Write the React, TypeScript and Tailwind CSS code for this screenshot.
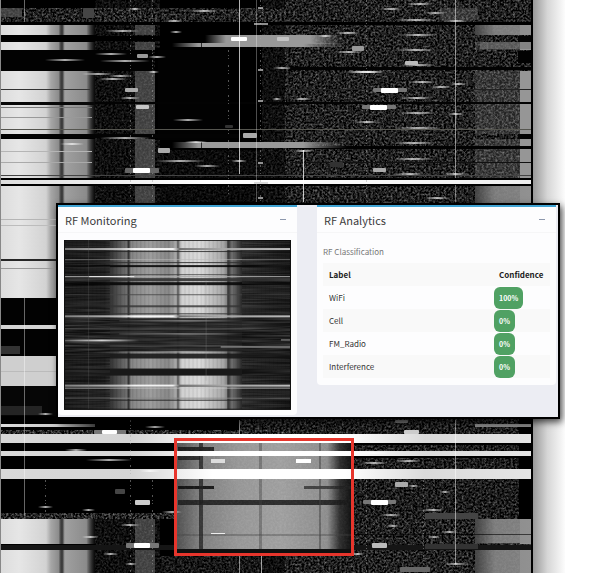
import React from "react";

type Rect = [x: number, y: number, w: number, h: number, fill: string];

// Time slots in which the wide burst on both band edges is active: [y, height]
const edgeBursts: [number, number][] = [
  [25, 10], [42, 8], [71, 31], [104, 30], [139, 159], [519, 25], [550, 23],
];

const quietBands: Rect[] = [
  [0, 22, 531, 3, "#000"], [0, 36, 205, 5, "#000"], [0, 50, 152, 21, "#020202"],
  [155, 48, 60, 92, "#000"], [158, 50, 72, 90, "#020202"], [290, 67, 241, 3, "#030303"],
  [95, 102, 436, 2, "#030303"], [0, 89, 90, 1, "#333"], [0, 102, 95, 3, "#080808"], [0, 134, 250, 4, "#030303"],
  [290, 146, 241, 3, "#020202"], [0, 178, 531, 2, "#000"], [0, 184, 531, 2, "#000"],
  [518, 36, 13, 6, "#050505"], [518, 51, 13, 12, "#020202"], [518, 134, 13, 5, "#050505"],
  [0, 117, 92, 1, "#999"], [0, 107, 92, 1, "#777"], [0, 129, 531, 1, "#55554f"],
  [0, 175, 531, 1, "#444"], [0, 162, 92, 1, "#aaa"], [0, 151, 92, 1, "#b5b5b5"],
  [290, 89, 241, 1, "#222"], [290, 162, 241, 1, "#111"],
  [0, 219, 56, 1, "#b5b5b5"], [0, 225, 56, 1, "#bcbcbc"], [0, 259, 56, 2, "#262626"],
  [0, 268, 56, 1, "#9a9a9a"], [0, 298, 56, 27, "#020202"], [0, 325, 56, 4, "#d4d4d4"],
  [0, 329, 56, 27, "#020202"], [0, 356, 56, 30, "#cfcfcf"], [0, 386, 56, 30, "#060606"],
  [0, 346, 20, 8, "#333"], [0, 406, 42, 9, "#242424"], [0, 371, 56, 1, "#bbb"],
];

const fullBursts: Rect[] = [
  [0, 180, 531, 4, "url(#beam)"], [0, 424, 95, 3, "url(#fadeOut)"], [475, 424, 56, 3, "#888"],
  [0, 434, 531, 9, "url(#band)"], [0, 451, 531, 5, "url(#band)"], [0, 469, 531, 10, "url(#band)"],
];

const blobs: Rect[] = [
  [231, 37, 16, 4, "#fff"], [277, 37, 12, 4, "#c4c4c4"], [137, 54, 11, 4, "#999"], [125, 88, 13, 4, "#aaa"],
  [136, 105, 13, 4, "#c5c5c5"], [158, 148, 12, 5, "#aaa"], [243, 133, 14, 5, "#aaa"],
  [125, 168, 34, 5, "#666"], [133, 168, 17, 5, "#fff"], [352, 46, 12, 5, "#999"],
  [405, 61, 13, 4, "#bbb"], [373, 88, 34, 4, "#777"], [381, 88, 17, 5, "#fff"],
  [362, 105, 34, 4, "#777"], [370, 105, 17, 5, "#fff"], [373, 168, 13, 4, "#aaa"],
  [395, 420, 13, 3, "#777"], [404, 430, 15, 4, "#ccc"], [94, 430, 32, 4, "#777"], [102, 430, 15, 4, "#fff"],
  [115, 489, 10, 5, "#444"], [135, 500, 15, 5, "#ccc"], [395, 482, 13, 5, "#aaa"],
  [363, 500, 33, 4, "#777"], [371, 500, 17, 5, "#fff"], [126, 543, 33, 5, "#777"],
  [134, 543, 16, 5, "#fff"], [372, 543, 15, 5, "#bbb"], [83, 8, 11, 10, "#444"],
  [225, 125, 8, 3, "#333"], [330, 162, 13, 5, "#333"], [400, 567, 30, 5, "#666"],
];

// Short narrowband transmissions: [x, y, width]
const ticks: [number, number, number][] = [
  [45, 59, 40], [100, 60, 50], [95, 53, 32], [148, 56, 18], [98, 78, 30], [108, 75, 25], [105, 30, 35],
  [170, 31, 12], [190, 10, 28], [165, 20, 18], [129, 8, 12], [82, 73, 32], [148, 71, 11], [120, 97, 20],
  [173, 119, 30], [100, 137, 50], [185, 141, 22], [194, 165, 26], [155, 160, 50], [231, 160, 16], [60, 143, 24],
  [273, 67, 18], [272, 98, 10], [335, 32, 25], [380, 8, 22], [406, 3, 28], [425, 12, 20], [395, 19, 42],
  [443, 20, 26], [345, 71, 36], [399, 34, 38], [396, 49, 40], [400, 64, 36], [408, 81, 28], [430, 86, 22],
  [450, 83, 17], [400, 97, 34], [398, 112, 38], [355, 121, 24], [396, 127, 45], [392, 142, 44], [393, 158, 40],
  [395, 173, 30], [443, 173, 25], [425, 197, 24], [293, 150, 20], [293, 98, 18], [335, 51, 27], [318, 35, 15],
  [145, 426, 20], [65, 449, 22], [86, 459, 46], [38, 506, 15], [82, 509, 13], [120, 524, 20], [82, 536, 17],
  [125, 563, 12], [103, 553, 15], [422, 509, 22], [380, 514, 22], [386, 525, 14], [442, 531, 15], [428, 536, 12],
  [395, 460, 26], [360, 452, 28], [444, 563, 24], [350, 553, 15], [162, 511, 20], [408, 485, 11], [440, 491, 10],
  [38, 413, 15], [448, 113, 16], [140, 470, 20], [360, 462, 28],
];

// Continuous carriers: [x, y, height, opacity]
const carriers: [number, number, number, number][] = [
  [24, 0, 22, 0.4], [24, 298, 218, 0.4], [239, 0, 174, 0.7], [239, 420, 15, 0.5], [256, 0, 202, 0.3],
  [303, 150, 52, 0.75], [455, 0, 178, 0.5], [455, 185, 17, 0.4], [455, 420, 144, 0.5],
  [239, 556, 17, 0.5], [261, 556, 17, 0.6],
];

const dotted: [number, number, number][] = [
  [130, 0, 202], [152, 0, 202], [228, 50, 150], [260, 0, 202], [366, 0, 202],
  [130, 420, 153], [152, 480, 93], [366, 480, 93], [423, 480, 93], [45, 480, 35],
];

function Spectrogram() {
  return (
    <svg viewBox="0 0 565 573" className="block h-auto w-full" role="img" aria-label="Wideband RF waterfall">
      <defs>
        <linearGradient id="left"><stop offset="0" stopColor="#dcdcdc" /><stop offset=".2" stopColor="#e6e6e6" /><stop offset=".48" stopColor="#d2d2d2" /><stop offset=".53" stopColor="#a6a6a6" /><stop offset=".61" stopColor="#8c8c8c" /><stop offset=".635" stopColor="#3c3c3c" /><stop offset=".65" stopColor="#3c3c3c" /><stop offset=".675" stopColor="#a0a0a0" /><stop offset=".9" stopColor="#8b8b8b" /><stop offset="1" stopColor="#444" stopOpacity="0" /></linearGradient>
        <linearGradient id="beam"><stop offset="0" stopColor="#ddd" /><stop offset=".2" stopColor="#eee" /><stop offset=".4" stopColor="#fff" /><stop offset="1" stopColor="#eee" /></linearGradient>
        <linearGradient id="band"><stop offset="0" stopColor="#d9d9d9" /><stop offset=".25" stopColor="#d5d5d5" /><stop offset=".4" stopColor="#fff" /><stop offset=".65" stopColor="#fff" /><stop offset=".8" stopColor="#dadada" /><stop offset="1" stopColor="#e5e5e5" /></linearGradient>
        <linearGradient id="fadeOut"><stop offset="0" stopColor="#ddd" /><stop offset=".6" stopColor="#ccc" /><stop offset="1" stopColor="#444" /></linearGradient>
        <linearGradient id="hump"><stop offset="0" stopColor="#999" stopOpacity="0" /><stop offset=".15" stopColor="#999" /><stop offset=".75" stopColor="#999" /><stop offset="1" stopColor="#777" stopOpacity="0" /></linearGradient>
        <linearGradient id="wifi"><stop offset="0" stopColor="#555" /><stop offset=".13" stopColor="#888" /><stop offset=".35" stopColor="#a3a3a3" /><stop offset=".6" stopColor="#acacac" /><stop offset=".86" stopColor="#999" /><stop offset=".93" stopColor="#333" /><stop offset="1" stopColor="#111" /></linearGradient>
        <linearGradient id="edge"><stop offset="0" stopColor="#444" /><stop offset=".35" stopColor="#8a8a8a" /><stop offset="1" stopColor="#909090" /></linearGradient>
        <linearGradient id="drop"><stop offset="0" stopColor="#999" /><stop offset=".45" stopColor="#d6d6d6" /><stop offset="1" stopColor="#fcfcfc" /></linearGradient>
        <filter id="grain" x="0" y="0" width="100%" height="100%" colorInterpolationFilters="sRGB">
          <feTurbulence type="fractalNoise" baseFrequency=".45 .5" numOctaves="2" seed="4" />
          <feColorMatrix values="1 0 0 0 -.35  1 0 0 0 -.35  1 0 0 0 -.35  0 0 0 0 1" />
        </filter>
        <filter id="soft" x="-20%" y="-100%" width="140%" height="300%"><feGaussianBlur stdDeviation=".7 .4" /></filter>
        <filter id="resample" x="0" y="0" width="100%" height="100%" colorInterpolationFilters="sRGB"><feGaussianBlur stdDeviation=".45" /></filter>
        <linearGradient id="tick"><stop offset="0" stopColor="#fff" stopOpacity="0" /><stop offset=".5" stopColor="#fff" stopOpacity=".85" /><stop offset="1" stopColor="#fff" stopOpacity="0" /></linearGradient>
      </defs>

      <rect x="533" width="32" height="573" fill="url(#drop)" />
      <g filter="url(#resample)">
        <rect width="533" height="573" fill="#000" />
        <rect x="285" width="246" height="573" filter="url(#grain)" opacity=".85" />
        <rect x="262" width="23" height="573" filter="url(#grain)" opacity=".4" />
        <rect x="95" width="65" height="573" filter="url(#grain)" opacity=".4" />
        <rect y="8" width="285" height="14" filter="url(#grain)" opacity=".85" />
        <rect x="160" y="150" width="102" height="52" filter="url(#grain)" opacity=".3" />
        <rect x="160" y="556" width="102" height="17" filter="url(#grain)" opacity=".6" />
        <rect y="8" width="22" height="9" fill="#555" opacity=".7" />
        <rect x="440" y="8" width="38" height="12" fill="#777" opacity=".35" />

        {edgeBursts.map(([y, h]) => (
          <g key={y}>
            <rect y={y} width="96" height={h} fill="url(#left)" />
            <rect x="135" y={y} width="20" height={h} fill="#888" opacity=".45" />
            <rect x="475" y={y} width="56" height={h} fill="#8a8a8a" opacity=".25" />
            <rect x="520" y={y} width="11" height={h} fill="#969696" />
          </g>
        ))}
        {[25, 186, 519, 550].map((y) => (
          <rect key={y} x="475" y={y} width="56" height={y === 25 ? 10 : y === 186 ? 17 : 24} fill="url(#edge)" opacity=".85" />
        ))}
        <rect x="480" y="42" width="51" height="7" fill="#777" opacity=".6" />

        {quietBands.map(([x, y, w, h, fill], i) => <rect key={i} x={x} y={y} width={w} height={h} fill={fill} />)}
        <rect x="205" y="35" width="140" height="9" fill="url(#hump)" />
        <rect x="172" y="43" width="175" height="4" fill="url(#hump)" />
        <rect x="172" y="142" width="175" height="6" fill="url(#hump)" />
        <rect x="201" y="43" width="1" height="5" fill="#000" opacity=".7" />
        <rect x="201" y="142" width="1" height="6" fill="#000" opacity=".7" />

        <rect y="416" width="531" height="103" fill="#000" />
        <rect x="240" y="416" width="279" height="103" filter="url(#grain)" opacity=".75" />
        <rect y="430" width="290" height="4" filter="url(#grain)" />
        <rect y="513" width="175" height="6" filter="url(#grain)" />
        <rect y="443" width="531" height="2" fill="#000" />
        <rect y="456" width="531" height="2" fill="#000" />
        <rect y="545" width="531" height="5" fill="#151515" />
        <rect x="354" y="534" width="177" height="1" fill="#000" opacity=".6" />
        <rect x="425" y="513" width="53" height="6" fill="#444" />
        <rect x="425" y="544" width="53" height="5" fill="#333" />

        <rect x="176" y="440" width="176" height="109" fill="url(#wifi)" />
        <rect x="178" y="447" width="36" height="4" fill="#111" opacity=".8" />
        <rect x="178" y="456" width="22" height="4" fill="#111" opacity=".7" />
        <rect x="178" y="486" width="36" height="3" fill="#080808" opacity=".85" />
        <rect x="304" y="486" width="48" height="3" fill="#222" opacity=".7" />
        <rect x="178" y="500" width="174" height="5" fill="#1b1b1b" opacity=".85" />
        <rect x="176" y="534" width="176" height="2" fill="#444" opacity=".35" />
        <rect x="176" y="549" width="176" height="5" fill="#101010" />
        <rect x="199" y="440" width="4" height="109" fill="#222" opacity=".75" />
        <rect x="259" y="440" width="3" height="109" fill="#444" opacity=".4" />
        <rect x="319" y="440" width="2" height="109" fill="#444" opacity=".5" />
        <rect x="178" y="440" width="172" height="109" filter="url(#grain)" opacity=".08" />

        {fullBursts.map(([x, y, w, h, fill]) => <rect key={y + x} x={x} y={y} width={w} height={h} fill={fill} />)}
        <rect x="211" y="459" width="14" height="4" fill="#ddd" filter="url(#soft)" />
        <rect x="296" y="459" width="15" height="4" fill="#fff" filter="url(#soft)" />
        <rect x="211" y="533" width="14" height="1" fill="#eee" />
        <rect y="0" width="1" height="573" fill="#888" />

        {carriers.map(([x, y, h, o], i) => <rect key={i} x={x} y={y} width="1" height={h} fill="#fff" opacity={o} />)}
        {dotted.map(([x, y, h], i) => (
          <path key={i} d={`M${x}.5 ${y}v${h}`} stroke="#aaa" strokeWidth="1" strokeDasharray="2 3 1 2 1 6" opacity=".5" />
        ))}
        {[7, 23, 69, 100, 162, 182, 197].map((y) => (
          <rect key={y} x={y === 23 || y === 182 ? 254 : 258} y={y} width={y === 23 || y === 182 ? 14 : 5} height="2" fill="#ccc" opacity=".7" />
        ))}
        {ticks.map(([x, y, w], i) => <rect key={i} x={x} y={y} width={w} height="2" fill="url(#tick)" opacity=".8" />)}
        {blobs.map(([x, y, w, h, fill], i) => <rect key={i} x={x} y={y} width={w} height={h} rx="1" fill={fill} filter="url(#soft)" />)}
        <rect x="350" y="71" width="36" height="2" fill="url(#tick)" />
        <rect x="531" width="2" height="573" fill="#000" />
      </g>
      <rect x="175.500" y="439.500" width="177" height="115" fill="none" stroke="#e7352c" strokeWidth="3" />
    </svg>
  );
}

// Horizontal streaks of the narrow waterfall: [y, height, colour, opacity]
const streaks: [number, number, string, number][] = [
  [0, 1, "#111", 0.8], [11, 1, "#222", 0.8], [19, 1, "#bbb", 0.6], [22, 1, "#333", 0.9], [25, 2, "#080808", 0.9],
  [34, 1, "#333", 0.7], [38, 3, "#333", 0.9], [42, 3, "#080808", 0.9], [54, 1, "#444", 0.8], [65, 2, "#333", 0.8],
  [73, 1, "#333", 0.9], [78, 33, "#222", 0.93], [88, 1, "#777", 0.8], [105, 1, "#666", 0.8],
  [113, 5, "#181818", 0.9], [128, 7, "#191919", 1], [145, 1, "#444", 0.8], [157, 1, "#888", 0.8], [159, 1, "#222", 0.9],
];

function NarrowWaterfall() {
  return (
    <svg viewBox="0 0 226 169" className="block h-auto w-full" role="img" aria-label="Monitored channel waterfall">
      <defs>
        <linearGradient id="chan">
          <stop offset="0" stopColor="#181818" /><stop offset=".18" stopColor="#202020" /><stop offset=".23" stopColor="#4a4a4a" />
          <stop offset=".275" stopColor="#707070" /><stop offset=".285" stopColor="#333" /><stop offset=".295" stopColor="#858585" />
          <stop offset=".38" stopColor="#9e9e9e" /><stop offset=".46" stopColor="#888" /><stop offset=".495" stopColor="#aaa" />
          <stop offset=".502" stopColor="#555" /><stop offset=".515" stopColor="#d0d0d0" /><stop offset=".6" stopColor="#dadada" />
          <stop offset=".7" stopColor="#a8a8a8" /><stop offset=".715" stopColor="#969696" /><stop offset=".722" stopColor="#333" />
          <stop offset=".74" stopColor="#707070" /><stop offset=".78" stopColor="#2f2f2f" /><stop offset="1" stopColor="#161616" />
        </linearGradient>
        <linearGradient id="pulse"><stop offset="0" stopColor="#888" /><stop offset=".25" stopColor="#ccc" /><stop offset=".31" stopColor="#fff" /><stop offset=".48" stopColor="#fff" /><stop offset=".51" stopColor="#666" /><stop offset=".7" stopColor="#aaa" /><stop offset="1" stopColor="#ccc" /></linearGradient>
        <linearGradient id="mid"><stop offset="0" stopColor="#fff" stopOpacity=".2" /><stop offset=".5" stopColor="#fff" stopOpacity=".8" /><stop offset=".75" stopColor="#fff" stopOpacity=".5" /><stop offset="1" stopColor="#fff" stopOpacity="0" /></linearGradient>
        <pattern id="lines" width="4" height="169" patternUnits="userSpaceOnUse"><rect width="1" height="169" fill="#000" opacity=".1" /></pattern>
        <filter id="streaky" x="0" y="0" width="100%" height="100%" colorInterpolationFilters="sRGB">
          <feTurbulence type="fractalNoise" baseFrequency=".02 .6" numOctaves="2" seed="8" />
          <feColorMatrix values=".7 0 0 0 -.22  .7 0 0 0 -.22  .7 0 0 0 -.22  0 0 0 0 .3" />
        </filter>
      </defs>
      <g filter="url(#resample)">
        <rect width="226" height="169" fill="url(#chan)" />
        <rect width="226" height="169" fill="url(#lines)" />
        {streaks.map(([y, h, fill, o]) => <rect key={y} y={y} width="226" height={h} fill={fill} opacity={o} />)}
        {[80, 93, 111].map((y) => <rect key={y} x="55" y={y} width="125" height="1" fill="url(#mid)" />)}
        <rect width="45" height="169" filter="url(#streaky)" />
        <rect x="178" width="48" height="169" filter="url(#streaky)" />
        <rect y="78" width="226" height="34" filter="url(#streaky)" />
        {[8, 75, 144].map((y) => <rect key={y} y={y} width="226" height="2" fill="url(#pulse)" opacity=".9" />)}
        <rect y="147" width="226" height="1" fill="#ccc" opacity=".7" />
        <rect y="36" width="226" height="1" fill="#aaa" />
        <rect x="25" y="36" width="45" height="1" fill="#eee" />
        <rect y="99" width="75" height="2" fill="url(#mid)" />
        <rect x="216" y="99" width="10" height="1" fill="#999" />
        <rect x="156" y="106" width="70" height="1" fill="#aaa" />
        <rect x="24" width="1" height="169" fill="#777" opacity=".25" />
        <rect x="141" y="40" width="1" height="100" fill="#999" opacity=".25" />
      </g>
      <path d="M.5 0v168.500h225V0" fill="none" stroke="#111" />
    </svg>
  );
}

function Card({ title, children }: { title: string; children: React.ReactNode }) {
  return (
    <section className="flex-1 rounded-b-sm border-t-2 border-[#3fa3d3] bg-[#fdfdfe]">
      <header className="flex h-[26px] items-center justify-between border-b border-[#f6f6f7] pr-2.5 pl-[7px]">
        <h2 className="text-[11px] leading-4 text-[#3c3c3c]">{title}</h2>
        <button type="button" aria-label={`Collapse ${title}`} className="flex h-4 w-2 items-center justify-center">
          <span className="h-px w-1.5 bg-[#8d98ad]" />
        </button>
      </header>
      <div className="px-1.5">{children}</div>
    </section>
  );
}

const classes = [
  { label: "WiFi", confidence: 100 },
  { label: "Cell", confidence: 0 },
  { label: "FM_Radio", confidence: 0 },
  { label: "Interference", confidence: 0 },
];

export default function App() {
  return (
    <div className="min-h-screen bg-white font-['Noto_Sans_CJK_SC',sans-serif]">
      <main className="relative w-full max-w-[565px] overflow-hidden">
        <Spectrogram />
        <div className="absolute top-[203px] right-[5px] left-14 flex items-start gap-5 border-2 border-black bg-[#ecedf3] pr-0.5 pb-0.5 shadow-[2px_3px_7px_rgba(0,0,0,0.7)]">
          <Card title="RF Monitoring">
            <div className="pt-[7px] pb-[5px]">
              <NarrowWaterfall />
            </div>
          </Card>
          <Card title="RF Analytics">
            <h3 className="pt-3 pb-1 text-[8px] leading-[14px] text-[#777]">RF Classification</h3>
            <table className="mb-[7px] w-full table-fixed border-collapse text-left text-[8px] leading-3 text-[#333]">
              <thead>
                <tr className="h-[23px] bg-[#f9f9f9] text-[#222]">
                  <th className="p-0 pl-1.5 font-bold">Label</th>
                  <th className="w-14 p-0 pl-[5px] font-bold">Confidence</th>
                </tr>
              </thead>
              <tbody>
                {classes.map(({ label, confidence }) => (
                  <tr key={label} className="h-[23px] even:bg-[#f9f9f9]">
                    <td className="p-0 pl-1.5">{label}</td>
                    <td className="p-0">
                      <span className="block h-[22px] w-fit rounded-md bg-[#50a163] px-[5px] text-[7px] leading-[22px] font-bold text-white">
                        {confidence}%
                      </span>
                    </td>
                  </tr>
                ))}
              </tbody>
            </table>
          </Card>
        </div>
      </main>
    </div>
  );
}
